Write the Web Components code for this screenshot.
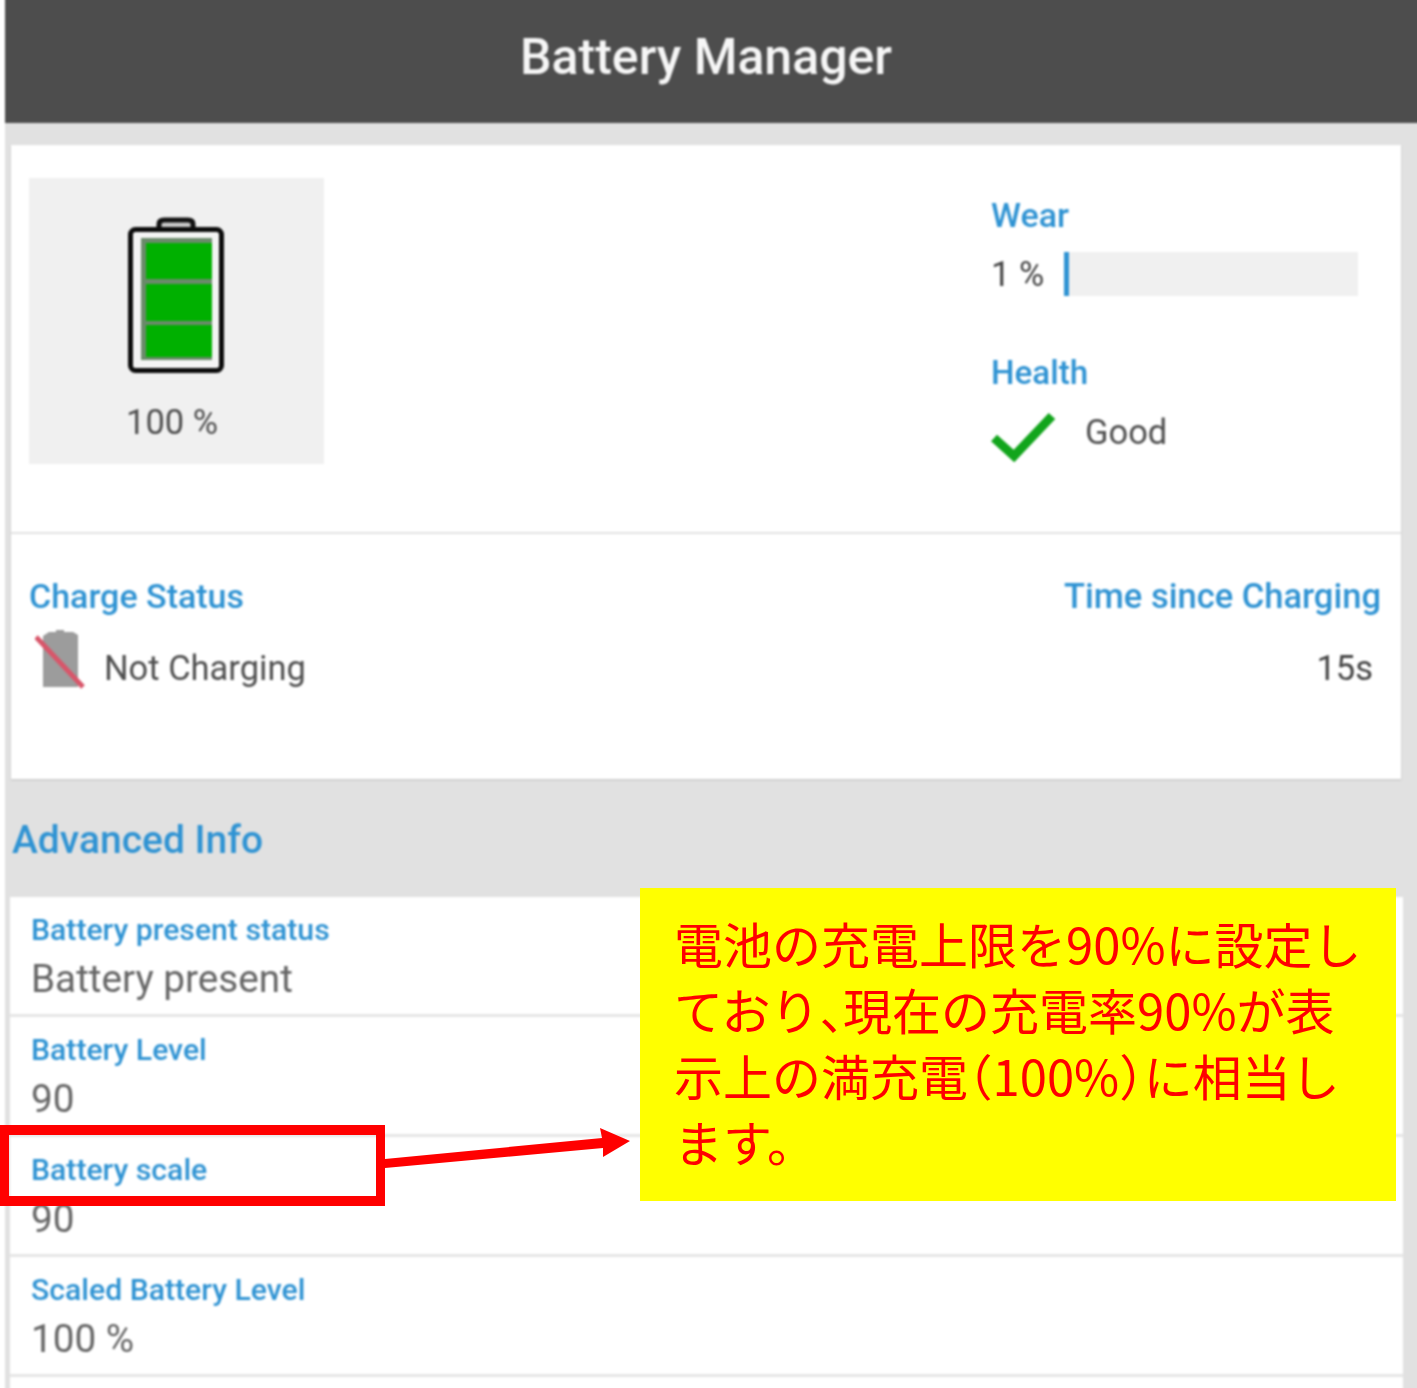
<!DOCTYPE html>
<html lang="ja">
<head>
<meta charset="utf-8">
<title>Battery Manager</title>
<style>
html, body { margin: 0; background: #fff; }
body { width: 1417px; height: 1388px; overflow: hidden; position: relative; font-family: Roboto, "Liberation Sans", sans-serif; }
.halt { font-feature-settings: "halt"; }
.comma { font-feature-settings: "halt"; letter-spacing: -1px; }
</style>
</head>
<body>
<bm-screen>
  <bm-header slot="header">Battery Manager</bm-header>
  <bm-summary></bm-summary>
  <bm-section-title>Advanced Info</bm-section-title>
  <bm-info-list>
    <bm-info-row label="Battery present status" value="Battery present"></bm-info-row>
    <bm-info-row label="Battery Level" value="90"></bm-info-row>
    <bm-info-row label="Battery scale" value="90"></bm-info-row>
    <bm-info-row label="Scaled Battery Level" value="100 %"></bm-info-row>
    <bm-info-row></bm-info-row>
  </bm-info-list>
</bm-screen>
<bm-callout>電池の充電上限を90%に設定し<br>ており<span class="comma">、</span>現在の充電率90%が表<br>示上の満充電<span class="halt">（</span>100%<span class="halt">）</span>に相当し<br>ます。</bm-callout>

<script>
const BLUE = "#2f93d3";

class BmScreen extends HTMLElement {
  constructor() {
    super();
    this.attachShadow({ mode: "open" });
    // negative margins keep the blur's soft edge off the top and right of the window
    this.shadowRoot.innerHTML = `
<style>
:host { display: block; margin: -6px -6px 0 5px; height: 1400px; background: #e1e1e1; overflow: hidden; filter: blur(1px); }
</style>
<slot name="header"></slot>
<slot></slot>`;
  }
}

class BmHeader extends HTMLElement {
  constructor() {
    super();
    this.attachShadow({ mode: "open" });
    this.shadowRoot.innerHTML = `
<style>
:host {
  display: flex;
  align-items: center;
  justify-content: center;
  height: 129px;
  padding: 6px 16px 10px 0;
  box-sizing: border-box;
  background: #4d4d4d;
  color: #f6f6f6;
  font: 500 50px Roboto, sans-serif;
}
</style>
<slot></slot>`;
  }
}

class BmSummary extends HTMLElement {
  constructor() {
    super();
    this.attachShadow({ mode: "open" });
    this.shadowRoot.innerHTML = `
<style>
:host {
  display: block;
  margin: 22px 22px 0 6px;
  height: 634px;
  background: #fff;
  box-shadow: 0 1px 2px rgba(0,0,0,.15);
  color: #4f4f4f;
  font: 400 34.500px/40px Roboto, sans-serif;
}
.top {
  height: 389px;
  box-sizing: border-box;
  border-bottom: 2px solid #e2e2e2;
  padding: 33px 0 0 18px;
  display: flex;
  justify-content: space-between;
}
.level {
  width: 295px;
  height: 286px;
  background: #f0f0f0;
  display: flex;
  flex-direction: column;
  align-items: center;
  padding: 39px 2px 0 0;
  box-sizing: border-box;
}
.level svg { display: block; }
.level span { margin: 29px 7px 0 0; }
.side { width: 410px; padding-top: 18px; }
.cap { color: ${BLUE}; font-weight: 500; font-size: 34px; line-height: 38px; }
.wear { display: flex; align-items: center; margin-top: 18px; height: 44px; }
.wear span { width: 73px; color: #444; }
.bar { width: 294px; height: 44px; background: #f0f0f0; }
.bar i { display: block; width: 5px; height: 100%; background: ${BLUE}; }
.health { margin-top: 58px; font-size: 33.200px; }
.good { display: flex; gap: 29px; margin-top: 19px; align-items: flex-start; }
.good span { margin-top: 1px; }
.bottom {
  padding: 43px 20px 0 18px;
  display: flex;
  justify-content: space-between;
}
.status { display: flex; align-items: flex-start; gap: 11px; margin: 11px 0 0 0; }
.status span { margin-top: 22px; }
.right { text-align: right; }
.right .cap { font-size: 34.500px; }
.right div:last-child { margin-top: 33px; padding-right: 8px; color: #444; }
</style>
<div class="top">
  <div class="level">
    <svg width="96" height="156" viewBox="0 0 96 156">
      <path d="M31 11V7q0-4 5-4h24q5 0 5 4v4" fill="#c9c9c9" stroke="#111" stroke-width="5"/>
      <rect x="2.500" y="12.500" width="91" height="141" rx="5" fill="#f4f4f4" stroke="#0c0c0c" stroke-width="5"/>
      <rect x="13" y="21" width="71" height="122" fill="#6b8a6b"/>
      <rect x="18" y="26" width="66" height="36" fill="#00b000"/>
      <rect x="18" y="67" width="66" height="37" fill="#00b000"/>
      <rect x="18" y="108" width="66" height="32" fill="#00b000"/>
    </svg>
    <span>100 %</span>
  </div>
  <div class="side">
    <div class="cap">Wear</div>
    <div class="wear"><span>1 %</span><div class="bar"><i></i></div></div>
    <div class="cap health">Health</div>
    <div class="good">
      <svg width="65" height="51" viewBox="0 0 65 51"><path d="M3 27 L23 45 L61 5" fill="none" stroke="#12a51c" stroke-width="9"/></svg>
      <span>Good</span>
    </div>
  </div>
</div>
<div class="bottom">
  <div>
    <div class="cap">Charge Status</div>
    <div class="status">
      <svg width="58" height="64" viewBox="0 0 58 64" style="margin-left:6px">
        <path d="M8 10l6-4h7V4h8v2h9l5 3v52H8z" fill="#9c9c9c"/>
        <path d="M1 11 L48 61" stroke="#d8566a" stroke-width="5" fill="none"/>
      </svg>
      <span>Not Charging</span>
    </div>
  </div>
  <div class="right">
    <div class="cap">Time since Charging</div>
    <div>15s</div>
  </div>
</div>`;
  }
}

class BmSectionTitle extends HTMLElement {
  constructor() {
    super();
    this.attachShadow({ mode: "open" });
    this.shadowRoot.innerHTML = `
<style>
:host {
  display: block;
  height: 118px;
  padding: 38px 0 0 7px;
  box-sizing: border-box;
  color: ${BLUE};
  font: 500 39px/46px Roboto, sans-serif;
}
</style>
<slot></slot>`;
  }
}

class BmInfoList extends HTMLElement {
  constructor() {
    super();
    this.attachShadow({ mode: "open" });
    this.shadowRoot.innerHTML = `
<style>
:host { display: block; margin: 0 20px 0 5px; background: #fff; }
</style>
<slot></slot>`;
  }
}

class BmInfoRow extends HTMLElement {
  static get observedAttributes() { return ["label", "value"]; }

  constructor() {
    super();
    this.attachShadow({ mode: "open" });
    this._render();
  }

  attributeChangedCallback() { this._render(); }

  _render() {
    const label = this.getAttribute("label") || "";
    const value = this.getAttribute("value") || "";
    this.shadowRoot.innerHTML = `
<style>
:host {
  display: block;
  height: 120px;
  box-sizing: border-box;
  padding: 15px 0 0 21px;
  border-bottom: 3px solid #e6e6e6;
}
.label { color: ${BLUE}; font: 500 30.200px/36px Roboto, sans-serif; }
.value { color: #666; font: 400 38.700px/46px Roboto, sans-serif; margin-top: 8px; }
</style>
<div class="label">${label}</div>
<div class="value">${value}</div>`;
  }
}

class BmCallout extends HTMLElement {
  constructor() {
    super();
    this.attachShadow({ mode: "open" });
    this.shadowRoot.innerHTML = `
<style>
:host { display: contents; }
.note {
  position: absolute;
  left: 640px; top: 888px;
  width: 756px; height: 313px;
  box-sizing: border-box;
  padding: 22px 0 0 34px;
  background: #ff0;
  color: #f00;
  font: 400 49px/66px "Noto Sans CJK JP", sans-serif;
  white-space: nowrap;
}
.mark {
  position: absolute;
  left: 0; top: 1125px;
  width: 367px; height: 61px;
  border: 9px solid #f00;
  border-top-width: 10px;
  border-bottom-width: 10px;
}
svg { position: absolute; left: 380px; top: 1120px; }
</style>
<div class="mark"></div>
<svg width="255" height="55" viewBox="0 0 255 55"><path d="M5 39 L222 18 L220 8 L250 21 L223 37 L223 28 L5 48z" fill="#f00"/></svg>
<div class="note"><slot></slot></div>`;
  }
}

customElements.define("bm-screen", BmScreen);
customElements.define("bm-header", BmHeader);
customElements.define("bm-summary", BmSummary);
customElements.define("bm-section-title", BmSectionTitle);
customElements.define("bm-info-list", BmInfoList);
customElements.define("bm-info-row", BmInfoRow);
customElements.define("bm-callout", BmCallout);
</script>
</body>
</html>
